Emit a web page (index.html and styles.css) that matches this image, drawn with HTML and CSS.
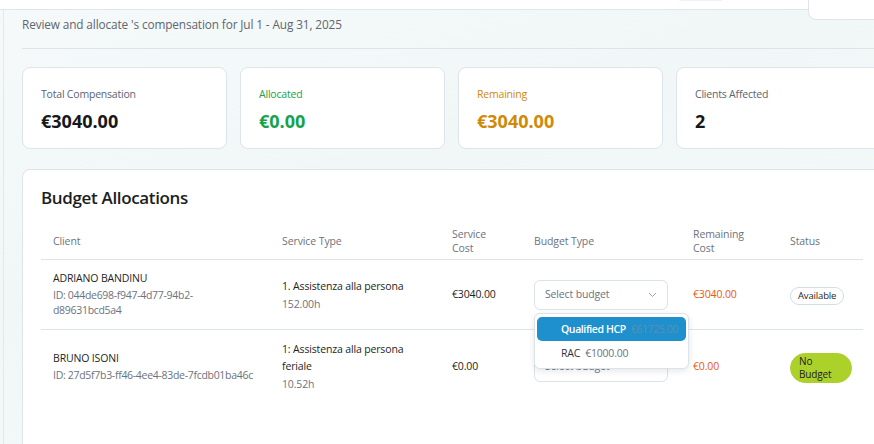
FILE: index.html
```html
<!DOCTYPE html>
<html>
<head>
<meta charset="utf-8">
<link rel="stylesheet" href="styles.css">
</head>
<body>
<div class="topbar">
  <div class="top-pill"></div>
</div>
<div class="top-box"></div>
<div class="frame">
  <p class="subtitle">Review and allocate 's compensation for Jul 1 - Aug 31, 2025</p>
  <div class="divider"></div>
  <div class="cards">
    <div class="card">
      <div class="card-label">Total Compensation</div>
      <div class="card-value">€3040.00</div>
    </div>
    <div class="card">
      <div class="card-label green">Allocated</div>
      <div class="card-value green">€0.00</div>
    </div>
    <div class="card">
      <div class="card-label amber">Remaining</div>
      <div class="card-value amber">€3040.00</div>
    </div>
    <div class="card">
      <div class="card-label">Clients Affected</div>
      <div class="card-value">2</div>
    </div>
  </div>
  <div class="panel">
    <h2 class="panel-title">Budget Allocations</h2>
    <table class="alloc">
      <colgroup>
        <col class="c-client"><col class="c-service"><col class="c-cost"><col class="c-budget"><col class="c-remain"><col class="c-status">
      </colgroup>
      <thead>
        <tr>
          <th>Client</th>
          <th>Service Type</th>
          <th>Service<br>Cost</th>
          <th>Budget Type</th>
          <th>Remaining<br>Cost</th>
          <th>Status</th>
        </tr>
      </thead>
      <tbody>
        <tr class="row1">
          <td>
            <div class="name">ADRIANO BANDINU</div>
            <div class="muted id">ID: 044de698-f947-4d77-94b2-<br>d89631bcd5a4</div>
          </td>
          <td>
            <div class="svc">1. Assistenza alla persona</div>
            <div class="muted hours">152.00h</div>
          </td>
          <td>€3040.00</td>
          <td class="budget-cell">
            <div class="select">
              <span>Select budget</span>
              <svg class="chev" width="9" height="6" viewBox="0 0 9 6"><path d="M1 1l3.5 3.5L8 1" fill="none" stroke="#9aa3ad" stroke-width="1"/></svg>
            </div>
            <div class="menu">
              <div class="opt active"><span class="opt-name">Qualified HCP</span><span class="opt-amt">€61725.00</span></div>
              <div class="opt"><span class="opt-name">RAC</span><span class="opt-amt">€1000.00</span></div>
            </div>
          </td>
          <td class="orange">€3040.00</td>
          <td><span class="badge">Available</span></td>
        </tr>
        <tr class="row2">
          <td>
            <div class="name">BRUNO ISONI</div>
            <div class="muted id">ID: 27d5f7b3-ff46-4ee4-83de-7fcdb01ba46c</div>
          </td>
          <td>
            <div class="svc">1: Assistenza alla persona<br>feriale</div>
            <div class="muted hours">10.52h</div>
          </td>
          <td>€0.00</td>
          <td>
            <div class="select">
              <span>Select budget</span>
            </div>
          </td>
          <td class="orange">€0.00</td>
          <td><span class="badge nob">No<br>Budget</span></td>
        </tr>
      </tbody>
    </table>
  </div>
</div>
</body>
</html>
```
FILE: styles.css
```css
* { box-sizing: border-box; }
html, body { margin: 0; padding: 0; }
body {
  width: 874px;
  height: 444px;
  overflow: hidden;
  font-family: "Open Sans", "Noto Sans", sans-serif;
  color: #1f2328;
  background: linear-gradient(160deg, #f5f9f9 0%, #f1f7f7 40%, #f5f8f9 100%);
  position: relative;
}
.topbar {
  height: 10px;
  background: #ffffff;
  border-bottom: 1px solid #dfe6ee;
  position: relative;
}
.top-pill {
  position: absolute;
  left: 676px;
  top: -10px;
  width: 50px;
  height: 11px;
  border-radius: 6px;
  background: #eef2f8;
}
.top-box {
  position: absolute;
  left: 808px;
  top: -6px;
  width: 80px;
  height: 26px;
  background: #fff;
  border: 1px solid #dfe5ea;
  border-radius: 8px;
}
.frame {
  margin-left: 3px;
  border-left: 1px solid #e2e9ee;
  padding-left: 18px;
  width: 871px;
  height: 434px;
  overflow: hidden;
}
.subtitle {
  margin: 0;
  padding-top: 6px;
  font-size: 11.8px;
  line-height: 16px;
  color: #5f6670;
  letter-spacing: -0.12px;
}
.divider {
  margin-top: 16px;
  height: 1px;
  background: #dce4e8;
  width: 860px;
}
.cards {
  display: flex;
  gap: 13px;
  margin-top: 18px;
}
.card {
  flex: 0 0 205px;
  height: 82px;
  background: #fff;
  border: 1px solid #dde4ea;
  border-radius: 8px;
  padding: 19px 18px 0 18px;
}
.card-label {
  font-size: 10.5px;
  line-height: 14px;
  color: #5b6472;
  letter-spacing: -0.2px;
}
.card-value {
  margin-top: 9px;
  font-size: 18px;
  line-height: 22px;
  font-weight: 700;
  color: #16181b;
}
.green { color: #16a34a; }
.amber { color: #d08a06; }
.panel {
  margin-top: 20px;
  width: 860px;
  height: 290px;
  background: #fff;
  border: 1px solid #dde4ea;
  border-radius: 8px;
  padding: 16px 0 0 18px;
}
.panel-title {
  margin: 0;
  font-size: 17px;
  line-height: 24px;
  font-weight: 600;
  color: #1b1e22;
  letter-spacing: -0.35px;
}
.alloc {
  margin-top: 12px;
  border-collapse: collapse;
  table-layout: fixed;
  width: 822px;
  font-size: 10.5px;
}
.c-client { width: 229px; }
.c-service { width: 170px; }
.c-cost { width: 82px; }
.c-budget { width: 159px; }
.c-remain { width: 97px; }
.c-status { width: 85px; }
.alloc th {
  text-align: left;
  font-weight: 400;
  color: #6b7380;
  font-size: 10.5px;
  line-height: 14px;
  padding: 5px 12px 4px 12px;
  border-bottom: 1px solid #dde4e8;
  vertical-align: middle;
  letter-spacing: -0.1px;
}
.alloc td {
  padding: 0 12px;
  vertical-align: middle;
  line-height: 15px;
  color: #1c1f23;
  letter-spacing: -0.15px;
}
.row1 td { height: 70px; border-bottom: 1px solid #dde4e8; }
.row2 td { height: 74px; }
.name { color: #1c1f23; margin-bottom: 2px; }
.muted { color: #6b7380; }
.id { white-space: nowrap; letter-spacing: -0.3px; }
.svc { line-height: 17px; }
.hours { margin-top: 2px; }
.orange { color: #ea5a0c !important; }
.budget-cell { position: relative; }
.select {
  width: 134px;
  height: 30px;
  border: 1px solid #dbe2e8;
  border-radius: 6px;
  display: flex;
  align-items: center;
  justify-content: space-between;
  padding: 0 10px 0 10px;
  color: #6b7380;
  background: #fff;
}
.chev { margin-top: 1px; }
.menu {
  position: absolute;
  left: 12px;
  top: 53px;
  width: 155px;
  height: 56px;
  background: #fff;
  border: 1px solid #dbe2e8;
  border-radius: 6px;
  box-shadow: 0 2px 6px rgba(30, 50, 70, 0.12);
  padding: 3px 2px;
  z-index: 5;
}
.opt {
  height: 24px;
  display: flex;
  align-items: center;
  padding-left: 24px;
  gap: 5px;
  border-radius: 5px;
  color: #30343a;
  font-size: 10.5px;
  white-space: nowrap;
  overflow: hidden;
  letter-spacing: -0.2px;
}
.opt .opt-amt { color: #6b7380; }
.opt.active {
  background: #1e90cd;
}
.opt.active .opt-name { color: #fff; font-weight: 600; letter-spacing: -0.4px; }
.opt.active .opt-amt { color: #5f8fae; letter-spacing: -0.4px; }
.badge {
  display: inline-block;
  font-size: 9.5px;
  line-height: 12px;
  padding: 2px 7px;
  border: 1px solid #d5dde4;
  border-radius: 10px;
  color: #1c1f23;
  margin-top: 3px;
}
.badge.nob {
  background: #acd12b;
  border-color: #acd12b;
  border-radius: 15px;
  font-size: 10px;
  line-height: 13px;
  padding: 1px 20px 1px 8px;
  margin-top: 2px;
}
```
